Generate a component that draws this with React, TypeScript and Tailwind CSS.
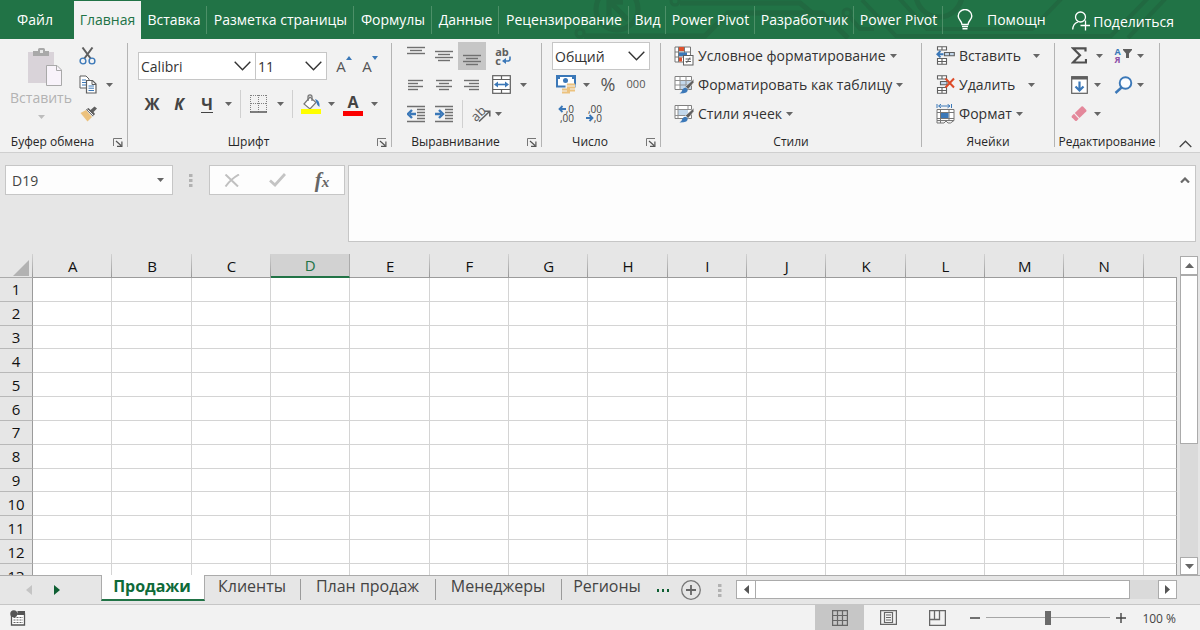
import React from "react";

type Kids = { children?: React.ReactNode };

const G = "#5f5f5f";
const B = "#3b78b8";

function Svg({ w, h, label, children }: Kids & { w: number; h: number; label?: string }) {
  return (
    <svg width={w} height={h} viewBox={`0 0 ${w} ${h}`} fill="none" className="shrink-0" aria-hidden={label ? undefined : true} aria-label={label}>
      {children}
    </svg>
  );
}

function Caret({ light = false }: { light?: boolean }) {
  return (
    <Svg w={7} h={4}>
      <path d="M0 0H7L3.500 4Z" fill={light ? "#bdbdbd" : "#666"} />
    </Svg>
  );
}

function Lines({ rows }: { rows: number[][] }) {
  return (
    <Svg w={20} h={20}>
      {rows.map(([y, a, b]) => (
        <path key={y} d={`M${a} ${y + 0.5}H${b}`} stroke="#707070" strokeWidth="1.4" />
      ))}
    </Svg>
  );
}

function Tool({ label, className = "", children }: Kids & { label: string; className?: string }) {
  return (
    <button type="button" aria-label={label} title={label} className={`flex shrink-0 items-center justify-center ${className}`}>
      {children}
    </button>
  );
}

function Launcher({ label }: { label: string }) {
  return (
    <Tool label={label} className="h-5 w-[18px]">
      <Svg w={10} h={9}>
        <path d="M0.5 8V0.5H9" stroke="#777" />
        <path d="M3 3L8 7.500M8.900 3.500V8.400H4" stroke="#555" strokeWidth="1.2" />
      </Svg>
    </Tool>
  );
}

function Group({ title, width, launcher, children }: Kids & { title: string; width: string; launcher?: boolean }) {
  return (
    <section aria-label={title} className={`flex shrink-0 ${width}`}>
      <div className="flex min-w-0 flex-1 flex-col">
        <div className="h-[94px]">{children}</div>
        <div className="flex h-5 items-center text-[12px] leading-5 text-[#262626]">
          <span className={`flex-1 text-center whitespace-nowrap ${launcher ? "pr-1" : ""}`}>{title}</span>
          {launcher && <Launcher label={`${title}: параметры`} />}
        </div>
      </div>
      <div className="mt-1 h-[104px] w-px bg-[#b4b4b4]" />
    </section>
  );
}

function Combo({ label, value, options, className }: { label: string; value: string; options: string[]; className: string }) {
  return (
    <label className={`relative flex h-7 shrink-0 items-center border border-[#c6c6c6] bg-white ${className}`}>
      <select aria-label={label} defaultValue={value} className="h-full w-full appearance-none bg-transparent pl-0.5 text-[14px] text-[#333] outline-none">
        {options.map((o) => (
          <option key={o}>{o}</option>
        ))}
      </select>
      <span className="pointer-events-none absolute right-1">
        <Svg w={17} h={10}>
          <path d="M0.7 0.7L8.5 8.7L16.3 0.7" stroke="#333" strokeWidth="1.4" />
        </Svg>
      </span>
    </label>
  );
}

/* ---------- icons ---------- */

const PasteIcon = () => (
  <Svg w={36} h={40}>
    <path d="M1 5H27V36H1Z" fill="#d9d3d9" />
    <path d="M6 4H11V2.500Q11 1 12.500 1H16.500Q18 1 18 2.500V4H22V9H6Z" fill="#a9a9a9" />
    <rect x="13" y="3" width="3" height="3" fill="#e8e8e8" />
    <path d="M19.500 18.500H30L34.500 23V38.500H19.500Z" fill="#f8f3fa" stroke="#a9a9a9" />
    <path d="M29.500 18.500V23.500H34.500" stroke="#a9a9a9" />
  </Svg>
);

const CutIcon = () => (
  <Svg w={18} h={18}>
    <path d="M3.500 0.500L12 12M13.500 0.500L5 12" stroke={G} strokeWidth="2" />
    <circle cx="4" cy="14" r="2.900" fill="#f2f2f2" stroke={B} strokeWidth="1.400" />
    <circle cx="13" cy="14" r="2.900" fill="#f2f2f2" stroke={B} strokeWidth="1.400" />
  </Svg>
);

const CopyIcon = () => (
  <Svg w={18} h={19}>
    <path d="M1 1H7L10 4V13H1Z" fill="#fff" stroke={G} />
    <path d="M3 5H7M3 7.500H7M3 10H7" stroke={B} />
    <path d="M7.500 5.500H13.500L17 9V18H7.500Z" fill="#fff" stroke={G} strokeWidth="1.200" />
    <path d="M13 5.500V9.500H17" stroke={G} />
    <path d="M9.500 11H15M9.500 13.200H15M9.500 15.500H15" stroke={B} />
  </Svg>
);

const BrushIcon = () => (
  <Svg w={18} h={16}>
    <path d="M0.500 7L6 4L12 11L7.500 15.500Z" fill="#ecc27e" />
    <path d="M6 3.500L8.500 2L10.500 4L14.500 0.500L17 2.500L13.500 6L15 8L13 10.500Z" fill={G} />
    <path d="M7.500 3.500L13.500 9.500" stroke="#f2f2f2" />
  </Svg>
);

const BordersIcon = () => (
  <Svg w={18} h={18}>
    <path d="M1 0.500H17M1 8.500H17" stroke="#808080" strokeDasharray="1 1" />
    <path d="M0.500 0V17M8.500 0V17M16.500 0V17" stroke="#808080" strokeDasharray="1 1" />
    <path d="M0 17H17" stroke={G} strokeWidth="1.600" />
  </Svg>
);

const FillIcon = () => (
  <Svg w={20} h={20}>
    <path d="M3 10L9 3L15 8.500L9 15Z" fill="#fff" stroke="#777" strokeWidth="1.200" />
    <path d="M7 7V3Q7 0.800 9 0.800Q11 0.800 11 3V7" stroke="#777" strokeWidth="1.300" />
    <path d="M14 5Q19 6 18.500 13Q16 12 15.500 8.500Z" fill={B} />
    <rect y="15" width="20" height="5" fill="#ffff00" />
  </Svg>
);

const WrapIcon = () => (
  <span className="flex flex-col items-start text-[11px] leading-[9px] font-bold text-[#5f5f5f]">
    <span>ab</span>
    <span className="flex items-center gap-px">
      c
      <Svg w={9} h={9}>
        <path d="M8 0.500V3Q8 5 6 5H3" stroke={B} strokeWidth="1.600" />
        <path d="M4 2L0 5L4 8Z" fill={B} />
      </Svg>
    </span>
  </span>
);

const MergeIcon = () => (
  <Svg w={19} h={19}>
    <rect x="0.700" y="0.700" width="17.600" height="17.600" fill="#fff" stroke={G} strokeWidth="1.200" />
    <path d="M1 4.500H18M1 14.500H18M9.500 1V4.500M9.500 14.500V18" stroke={G} strokeWidth="1.200" />
    <path d="M4 9.500H15" stroke={B} strokeWidth="1.600" />
    <path d="M6 6.500L2 9.500L6 12.500ZM13 6.500L17 9.500L13 12.500Z" fill={B} />
  </Svg>
);

const IndentIcon = ({ right = false }: { right?: boolean }) => (
  <Svg w={18} h={18}>
    <path d="M0 1.500H18M10 4.500H18M10 7.500H18M10 10.500H18M10 13.500H18M0 16.500H18" stroke="#707070" strokeWidth="1.300" />
    <path d={right ? "M0 9H6M4 5L8 9L4 13" : "M9 9H3M5 5L1 9L5 13"} stroke={B} strokeWidth="2.400" />
  </Svg>
);

const OrientIcon = () => (
  <span className="flex h-5 w-5 items-center">
    <span className="-rotate-45 pb-0.5 text-[13px] leading-3 text-[#5f5f5f]">ab</span>
    <span className="-ml-2 pt-1">
      <Svg w={13} h={12}>
        <path d="M1 11.500L11.500 1.500M6.500 1.200H11.800V6.500" stroke={G} strokeWidth="1.500" />
      </Svg>
    </span>
  </span>
);

const MoneyIcon = () => (
  <Svg w={20} h={20}>
    <rect x="1" y="1" width="18" height="10.500" fill="#fff" stroke={B} strokeWidth="2" />
    <rect x="1" y="1" width="3" height="3" fill={B} />
    <rect x="16" y="1" width="3" height="3" fill={B} />
    <circle cx="9.500" cy="5.500" r="2.500" fill={B} />
    <path d="M9.500 9.500Q14.500 7 19.500 9.500V18H9.500Z" fill="#f2f2f2" />
    <path d="M11 8.500H19V10.500H11ZM11 11.500H19V13.500H11ZM11 14.500H19V16.500H11ZM6 13.500H14V15.500H6ZM6 16.500H14V18.500H6Z" fill="#ecc27e" />
  </Svg>
);

const DecimalIcon = ({ less = false }: { less?: boolean }) => {
  const arrow = (
    <Svg w={8} h={8}>
      <path d={less ? "M0 4H6M3.500 1L6.500 4L3.500 7" : "M8 4H2M4.500 1L1.500 4L4.500 7"} stroke={B} strokeWidth="1.800" />
    </Svg>
  );
  return (
    <span className="flex w-[18px] flex-col items-end text-[10px] leading-[9px] text-[#444]">
      <span className="flex items-center">{!less && arrow}{less ? ",00" : ",0"}</span>
      <span className="flex items-center">{less && arrow}{less ? ",0" : ",00"}</span>
    </span>
  );
};

const CondIcon = () => (
  <Svg w={20} h={20}>
    <path d="M1 1H16.500V16H1Z" fill="#fff" stroke="#777" />
    <path d="M4.500 1V16M10.500 1V16M1 6H16M1 11H16" stroke="#777" />
    <rect x="5" y="1" width="5" height="4" fill="#e0502c" />
    <rect x="5" y="6.500" width="8" height="3.500" fill={B} />
    <rect x="5" y="11.500" width="3" height="4" fill="#e0502c" />
    <rect x="9.500" y="9.500" width="9.500" height="9.500" fill="#fff" stroke={G} />
    <path d="M11.500 13H17M11.500 15.500H17M16 11.500L12.500 17" stroke={G} />
  </Svg>
);

const StyleIcon = ({ cell = false }: { cell?: boolean }) => (
  <Svg w={20} h={20}>
    <path d="M1 1.500H17.500V14.500H1Z" fill="#fff" stroke="#808080" />
    <rect x={cell ? 4 : 6} y={cell ? 5.500 : 6} width={cell ? 10 : 11} height={cell ? 6 : 8} fill="#c3d8ec" />
    <path d={cell ? "M1 5.500H17.500M1 11.500H17.500M4 1.500V14.500M14 1.500V5.500" : "M1 5.500H17.500M1 10H17.500M6 1.500V14.500M12 1.500V14.500"} stroke="#909090" />
    <path d="M19.800 4L11.500 11.500L14 14.500L19.800 7.500Z" fill={G} stroke="#f2f2f2" strokeWidth="0.600" />
    <path d="M5.500 18.500Q8 17 8.500 14.500Q10.500 11.500 13.500 14Q15 18.500 5.500 18.500Z" fill={B} />
  </Svg>
);

const InsertIcon = () => (
  <Svg w={19} h={19}>
    <path d="M1.500 0.700H10.500V4H1.500ZM6 0.700V4M1.500 12.500H10.500V18.300H1.500ZM1.500 15.500H10.500M6 12.500V18.300" fill="#fff" stroke={G} strokeWidth="1.100" />
    <path d="M8.500 6.500H18.300V9.800H8.500ZM13.500 6.500V9.800" fill="#c3d8ec" stroke={G} strokeWidth="1.100" />
    <path d="M7.500 8.200H2M4.500 5L1.300 8.200L4.500 11.400" stroke={B} strokeWidth="1.900" />
  </Svg>
);

const DeleteIcon = () => (
  <Svg w={19} h={19}>
    <path d="M1.500 0.700H10.500V4H1.500ZM6 0.700V4M1.500 12.500H10.500V18.300H1.500ZM1.500 15.500H10.500M6 12.500V18.300" fill="#fff" stroke={G} strokeWidth="1.100" />
    <path d="M4.500 6.500H11V9.800H4.500Z" fill="#c3d8ec" stroke={G} strokeWidth="1.100" />
    <path d="M9.500 3.500L18 12.500M18 3.500L9.500 12.500" stroke="#dd4b28" strokeWidth="2" />
  </Svg>
);

const FormatIcon = () => (
  <Svg w={19} h={20}>
    <path d="M1 0V4M15.500 0V4M3 2H14M5 0.200L2.500 2L5 3.800M11.500 0.200L14 2L11.500 3.800" stroke={B} />
    <path d="M1 5.500H18V16.500H1Z" fill="#fff" stroke="#777" />
    <path d="M4.500 5.500V19M13 5.500V17M1 8.500H18M1 14.500H18" stroke="#777" />
    <path d="M1 16.500V19H8L10 17L12 19H14.500L18 16.500" stroke="#777" />
    <rect x="5" y="9" width="7.500" height="5" fill={B} />
  </Svg>
);

const SortIcon = () => (
  <span className="flex items-center text-[9px] leading-[8px] font-bold">
    <span className="flex flex-col items-center">
      <span className="text-[#3b78b8]">А</span>
      <span className="text-[#8e4fa8]">Я</span>
    </span>
    <span className="pb-1 pl-0.5">
      <Svg w={9} h={9}>
        <path d="M0 0H9V1L6 4.500V9H3V4.500L0 1Z" fill={G} />
      </Svg>
    </span>
  </span>
);

const FillDownIcon = () => (
  <Svg w={17} h={18}>
    <rect x="0.700" y="0.700" width="15.600" height="16.600" fill="#fff" stroke={G} strokeWidth="1.200" />
    <rect x="0.500" y="0.500" width="16" height="3" fill={G} />
    <path d="M8.500 5.500V14M4.500 10.500L8.500 14.500L12.500 10.500" stroke={B} strokeWidth="2.200" />
  </Svg>
);

const FindIcon = () => (
  <Svg w={19} h={18}>
    <circle cx="11.500" cy="7" r="5.800" fill="#fafcff" stroke={B} strokeWidth="1.900" />
    <path d="M7.500 11.500L1.500 17" stroke={B} strokeWidth="2.400" />
  </Svg>
);

const EraserIcon = () => (
  <Svg w={16} h={16}>
    <path d="M10.500 0.500Q11.300 0 12 0.600L15.300 4Q15.800 4.700 15.200 5.400L8.500 12L3.800 7Z" fill="#e4889b" />
    <path d="M3 7.800L7.700 12.800L5.800 14.700Q5 15.300 4.200 14.700L0.800 11.200Q0.300 10.500 0.900 9.800Z" fill="#e4889b" />
  </Svg>
);

/* ---------- header ---------- */

const tabs: [string, string][] = [
  ["Вставка", "w-[66px]"],
  ["Разметка страницы", "w-[147px]"],
  ["Формулы", "w-[78px]"],
  ["Данные", "w-[67px]"],
  ["Рецензирование", "w-[130px]"],
  ["Вид", "w-[37px]"],
  ["Power Pivot", "w-[89px]"],
  ["Разработчик", "w-[99px]"],
  ["Power Pivot", "w-[89px]"],
];

function Header() {
  return (
    <header className="relative flex h-[39px] overflow-hidden bg-[#217346] text-[14px] text-white">
      <svg className="pointer-events-none absolute inset-0" width="1200" height="39" viewBox="0 0 1200 39" fill="none" stroke="#216941" strokeWidth="5" aria-hidden="true">
        <circle cx="617" cy="9" r="21" />
        <path d="M628 20L611 3M609 16V2H623" />
        <circle cx="580" cy="33" r="4" strokeWidth="3" />
        <path d="M584 36H705L728 13H822L848 38" />
        <circle cx="675" cy="1" r="4" strokeWidth="3" />
        <path d="M680 3H800L812 13" />
        <circle cx="847" cy="13" r="4" strokeWidth="3" />
        <path d="M850 17L860 29H874M862 0L896 36H1111L1152 -6M899 -2L927 29H1032L1062 -2M1128 38L1166 -2" strokeWidth="4" />
        <circle cx="939" cy="-6" r="23" />
      </svg>
      <nav className="relative flex shrink-0">
        <button type="button" className="w-[74px] pr-1">Файл</button>
        <button type="button" aria-current="page" className="mt-px w-[67px] bg-[#f2f2f2] pb-px text-[#217346]">Главная</button>
        {tabs.map(([name, w], i) => (
          <button key={i} type="button" className={`flex items-center ${w}`}>
            <span className="flex-1 pl-px text-center whitespace-nowrap">{name}</span>
            <span className="h-7 w-px bg-[#4d9068]" />
          </button>
        ))}
      </nav>
      <button type="button" className="relative ml-3.5 flex shrink-0 items-center gap-3.5 whitespace-nowrap">
        <Svg w={16} h={21}>
          <path d="M5 15.500C5 12 1.200 11 1.200 7A6.600 6.300 0 0 1 14.800 7C14.800 11 11 12 11 15.500Z" stroke="#fff" strokeWidth="1.400" />
          <path d="M5 17.500H11M5.500 19.800H10.500" stroke="#fff" strokeWidth="1.400" />
        </Svg>
        Помощн
      </button>
      <button type="button" className="relative mr-[26px] ml-auto flex shrink-0 items-center gap-[3px] pt-[3px] whitespace-nowrap">
        <Svg w={18} h={20}>
          <circle cx="8.500" cy="6" r="5" stroke="#fff" strokeWidth="1.300" />
          <path d="M0.700 18.500Q1 12.500 6 11M13.500 9.500V19.500M8.500 14.500H18" stroke="#fff" strokeWidth="1.300" />
        </Svg>
        Поделиться
      </button>
    </header>
  );
}

/* ---------- ribbon ---------- */

function CommandRow({ icon, text }: { icon: React.ReactNode; text: string }) {
  return (
    <button type="button" className="flex h-[29px] items-center gap-1 whitespace-nowrap text-[14px] text-[#333]">
      {icon}
      <span>{text}</span>
      <Caret />
    </button>
  );
}

function Ribbon() {
  return (
    <div className="flex h-[114px] border-b border-[#cfcfcf] bg-[#f2f2f2]">
      <Group title="Буфер обмена" width="w-[128px]" launcher>
        <div className="flex pt-0.5">
          <button type="button" className="flex w-[76px] flex-col items-center pt-1.5 pl-1.5 text-[14px] text-[#b3b3b3]">
            <span className="pl-2"><PasteIcon /></span>
            <span className="leading-[22px]">Вставить</span>
            <span className="flex h-4 items-center"><Caret light /></span>
          </button>
          <div className="flex flex-col">
            <Tool label="Вырезать" className="h-[29px] w-6"><CutIcon /></Tool>
            <div className="flex">
              <Tool label="Копировать" className="h-[29px] w-6"><CopyIcon /></Tool>
              <Tool label="Варианты копирования" className="w-[18px]"><Caret /></Tool>
            </div>
            <Tool label="Формат по образцу" className="h-[29px] w-[26px]"><BrushIcon /></Tool>
          </div>
        </div>
      </Group>

      <Group title="Шрифт" width="w-[264px]" launcher>
        <div className="flex flex-col gap-2.5 pt-[13px] pl-2.5">
          <div className="flex items-center">
            <Combo label="Шрифт" value="Calibri" options={["Calibri", "Arial"]} className="w-[118px]" />
            <Combo label="Размер шрифта" value="11" options={["11", "12"]} className="w-[71px] border-l-0" />
            <Tool label="Увеличить размер" className="ml-2 h-7 w-[18px]">
              <span className="text-[15px] text-[#555]">A</span>
              <span className="self-start pt-1"><Svg w={6} h={4}><path d="M0 4L3 0L6 4Z" fill={B} /></Svg></span>
            </Tool>
            <Tool label="Уменьшить размер" className="ml-2 h-7 w-[18px]">
              <span className="text-[15px] text-[#555]">A</span>
              <span className="self-start pt-1"><Svg w={6} h={4}><path d="M0 0H6L3 4Z" fill={B} /></Svg></span>
            </Tool>
          </div>
          <div className="flex h-7 items-center text-[16px] font-bold text-[#444]">
            <Tool label="Полужирный" className="w-7">Ж</Tool>
            <Tool label="Курсив" className="w-[26px] italic">К</Tool>
            <Tool label="Подчеркнутый" className="w-[30px]"><span className="border-b border-[#444] leading-4">Ч</span></Tool>
            <Tool label="Варианты подчеркивания" className="w-[13px]"><Caret /></Tool>
            <span className="ml-[5px] h-7 w-px bg-[#d0d0d0]" />
            <Tool label="Границы" className="ml-[9px] w-[18px]"><BordersIcon /></Tool>
            <Tool label="Варианты границ" className="ml-1.5 w-3"><Caret /></Tool>
            <span className="ml-1.5 h-7 w-px bg-[#d0d0d0]" />
            <Tool label="Цвет заливки" className="ml-2 w-5"><FillIcon /></Tool>
            <Tool label="Варианты заливки" className="ml-1 w-3"><Caret /></Tool>
            <Tool label="Цвет текста" className="ml-1.5 h-6 w-5 flex-col">
              <span className="leading-[18px]">А</span>
              <span className="h-[5px] w-5 bg-[#fb0000]" />
            </Tool>
            <Tool label="Варианты цвета текста" className="ml-[5px] w-3"><Caret /></Tool>
          </div>
        </div>
      </Group>

      <Group title="Выравнивание" width="w-[150px]" launcher>
        <div className="flex flex-col pt-0.5 pl-2.5">
          <div className="flex h-[29px] items-center">
            <Tool label="По верхнему краю" className="h-7 w-7"><Lines rows={[[1, 1, 19], [4, 4, 16], [7, 1, 19]]} /></Tool>
            <Tool label="По середине" className="h-7 w-7"><Lines rows={[[5, 1, 19], [8, 4, 16], [11, 1, 19], [14, 4, 16]]} /></Tool>
            <Tool label="По нижнему краю" className="h-7 w-7 bg-[#c6c6c6]"><Lines rows={[[9, 1, 19], [12, 4, 16], [15, 1, 19], [18, 4, 16]]} /></Tool>
            <Tool label="Перенести текст" className="ml-[7px] w-5"><WrapIcon /></Tool>
          </div>
          <div className="flex h-[29px] items-center">
            <Tool label="По левому краю" className="h-7 w-7"><Lines rows={[[5, 2, 17], [8, 2, 12], [11, 2, 17], [14, 2, 12]]} /></Tool>
            <Tool label="По центру" className="h-7 w-7"><Lines rows={[[5, 2, 18], [8, 5, 15], [11, 2, 18], [14, 5, 15]]} /></Tool>
            <Tool label="По правому краю" className="h-7 w-7"><Lines rows={[[5, 2, 17], [8, 7, 17], [11, 2, 17], [14, 7, 17]]} /></Tool>
            <Tool label="Объединить" className="ml-1.5 w-[19px]"><MergeIcon /></Tool>
            <Tool label="Варианты объединения" className="ml-1.5 w-3"><Caret /></Tool>
          </div>
          <div className="flex h-[29px] items-center">
            <Tool label="Уменьшить отступ" className="h-7 w-7"><IndentIcon /></Tool>
            <Tool label="Увеличить отступ" className="h-7 w-7"><IndentIcon right /></Tool>
            <span className="ml-1 h-7 w-px bg-[#d0d0d0]" />
            <Tool label="Ориентация" className="ml-2 w-5"><OrientIcon /></Tool>
            <Tool label="Варианты ориентации" className="ml-px w-3"><Caret /></Tool>
          </div>
        </div>
      </Group>

      <Group title="Число" width="w-[119px]" launcher>
        <div className="flex flex-col pt-[3px] pl-2.5">
          <Combo label="Числовой формат" value="Общий" options={["Общий", "Числовой"]} className="w-[98px]" />
          <div className="flex h-[29px] items-center text-[#555]">
            <Tool label="Денежный формат" className="ml-1 w-5"><MoneyIcon /></Tool>
            <Tool label="Варианты денежного формата" className="ml-1 w-3"><Caret /></Tool>
            <Tool label="Процентный формат" className="ml-1.5 w-5 text-[18px]">%</Tool>
            <Tool label="Формат с разделителями" className="ml-1.5 w-6 text-[11px]">000</Tool>
          </div>
          <div className="flex h-[29px] items-center gap-2.5 pl-1">
            <Tool label="Увеличить разрядность"><DecimalIcon /></Tool>
            <Tool label="Уменьшить разрядность"><DecimalIcon less /></Tool>
          </div>
        </div>
      </Group>

      <Group title="Стили" width="w-[261px]">
        <div className="flex flex-col items-start pt-0.5 pl-[13px]">
          <CommandRow icon={<CondIcon />} text="Условное форматирование" />
          <CommandRow icon={<StyleIcon />} text="Форматировать как таблицу" />
          <CommandRow icon={<StyleIcon cell />} text="Стили ячеек" />
        </div>
      </Group>

      <Group title="Ячейки" width="w-[133px]">
        <div className="flex flex-col items-start pt-0.5 pl-3.5">
          <button type="button" className="flex h-[29px] items-center gap-1 text-[14px] text-[#333]">
            <InsertIcon />
            <span className="w-[70px] text-left">Вставить</span>
            <Caret />
          </button>
          <button type="button" className="flex h-[29px] items-center gap-1 text-[14px] text-[#333]">
            <DeleteIcon />
            <span className="w-[65px] text-left">Удалить</span>
            <Caret />
          </button>
          <CommandRow icon={<FormatIcon />} text="Формат" />
        </div>
      </Group>

      <Group title="Редактирование" width="w-[105px]">
        <div className="flex flex-col pt-0.5 pl-3.5">
          <div className="flex h-[29px] items-center">
            <Tool label="Сумма" className="w-5"><Svg w={16} h={17}><path d="M14.500 4.500V1.300H2L9 8.300L2 15.500H15V12" stroke="#505050" strokeWidth="2.200" /></Svg></Tool>
            <Tool label="Варианты суммы" className="ml-1 w-3"><Caret /></Tool>
            <Tool label="Сортировка и фильтр" className="ml-2 w-5"><SortIcon /></Tool>
            <Tool label="Варианты сортировки" className="ml-px w-3"><Caret /></Tool>
          </div>
          <div className="flex h-[29px] items-center">
            <Tool label="Заполнить" className="w-5"><FillDownIcon /></Tool>
            <Tool label="Варианты заполнения" className="ml-0.5 w-3"><Caret /></Tool>
            <Tool label="Найти и выделить" className="ml-2.5 w-5"><FindIcon /></Tool>
            <Tool label="Варианты поиска" className="ml-px w-3"><Caret /></Tool>
          </div>
          <div className="flex h-[29px] items-center">
            <Tool label="Очистить" className="w-5"><EraserIcon /></Tool>
            <Tool label="Варианты очистки" className="ml-0.5 w-3"><Caret /></Tool>
          </div>
        </div>
      </Group>

      <div className="flex flex-1 items-end justify-end pr-[7px]">
        <Tool label="Свернуть ленту" className="h-4 w-4">
          <Svg w={13} h={8}><path d="M0.700 7L6.500 1.200L12.300 7" stroke="#444" strokeWidth="1.300" /></Svg>
        </Tool>
      </div>
    </div>
  );
}

/* ---------- formula bar ---------- */

function Dots() {
  return (
    <Svg w={4} h={13}>
      <path d="M0 0H3.500V3H0ZM0 5H3.500V8H0ZM0 10H3.500V13H0Z" fill="#b2b2b2" />
    </Svg>
  );
}

function FormulaBar() {
  return (
    <div className="flex h-[101px] items-start px-1 pt-3 pl-[5px]">
      <div className="flex h-[30px] w-[168px] shrink-0 items-center border border-[#c6c6c6] bg-[#fdfdfd]">
        <input aria-label="Имя ячейки" defaultValue="D19" className="min-w-0 flex-1 bg-transparent pl-1.5 text-[14px] text-[#444] outline-none" />
        <Tool label="Список имен" className="h-full w-6"><Caret /></Tool>
      </div>
      <div className="flex h-[30px] w-9 shrink-0 items-center justify-center"><Dots /></div>
      <div className="flex h-[30px] w-[136px] shrink-0 items-center border border-[#c6c6c6] bg-[#fdfdfd]">
        <Tool label="Отмена" className="w-11">
          <Svg w={16} h={13}><path d="M1.500 0.500L14 12.500M15 0.500Q7 5 1.500 12.500" stroke="#c0c0c0" strokeWidth="2" /></Svg>
        </Tool>
        <Tool label="Ввод" className="w-[46px]">
          <Svg w={17} h={14}><path d="M1 7.500L6 12L16 1" stroke="#c4c4c4" strokeWidth="2.800" /></Svg>
        </Tool>
        <Tool label="Вставить функцию" className="w-11">
          <span className="font-['Liberation_Serif',serif] text-[21px] leading-6 font-bold text-[#666] italic">f</span>
          <span className="pt-1 font-['Liberation_Serif',serif] text-[15px] leading-5 font-bold text-[#666] italic">x</span>
        </Tool>
      </div>
      <div className="ml-[3px] flex h-[77px] flex-1 border border-[#c6c6c6] bg-[#fdfdfd]">
        <textarea aria-label="Строка формул" className="h-full flex-1 resize-none bg-transparent p-1 text-[14px] outline-none" />
        <Tool label="Свернуть строку формул" className="h-7 w-5">
          <Svg w={10} h={6}><path d="M1 5.500L5 1.500L9 5.500" stroke="#6a6a6a" strokeWidth="2.200" /></Svg>
        </Tool>
      </div>
    </div>
  );
}

/* ---------- sheet ---------- */

const columns = "ABCDEFGHIJKLMN".split("");
const rows = Array.from({ length: 13 }, (_, i) => i + 1);

const headLine = "bg-[linear-gradient(to_bottom,#d2d2d2,#999)] bg-[length:1px_100%] bg-right bg-no-repeat";

function Sheet() {
  return (
    <div className="flex min-h-[321px] flex-1">
      <div className="min-w-0 flex-1">
        <table className="h-full w-full table-fixed border-separate border-spacing-0 text-[15px]">
          <thead>
            <tr className="h-6">
              <th className={`w-[33px] border-b border-[#ababab] p-0 ${headLine}`}>
                <span className="flex justify-end pt-1 pr-1">
                  <Svg w={16} h={16}><path d="M16 0V16H0Z" fill="#b2b2b2" /></Svg>
                </span>
              </th>
              {columns.map((c) => (
                <th
                  key={c}
                  scope="col"
                  className={`h-6 p-0 leading-[22px] font-normal ${c === "D" ? "border-r border-b-2 border-r-[#ababab] border-b-[#217346] bg-[#d2d2d2] text-[#217346]" : `border-b border-[#9b9b9b] text-[#111] ${headLine}`}`}
                >
                  {c}
                </th>
              ))}
              <th aria-label="O" className="w-[33px] border-b border-[#9b9b9b] p-0" />
            </tr>
          </thead>
          <tbody>
            {rows.map((r) => {
              const last = r === 13;
              return (
                <tr key={r} className={last ? "h-[11px]" : ""}>
                  <th scope="row" className={`border-r border-[#9b9b9b] p-0 font-normal text-[#111] ${last ? "" : "border-b border-b-[#b8b8b8]"}`}>
                    <div className={last ? "h-2.5 overflow-hidden leading-[22px]" : "leading-[22px]"}>{r}</div>
                  </th>
                  {columns.map((c) => (
                    <td key={c} className={`border-r border-[#d4d4d4] bg-white p-0 ${last ? "" : "border-b"}`} />
                  ))}
                  <td className={`border-r border-r-[#9b9b9b] border-b-[#d4d4d4] bg-white p-0 ${last ? "" : "border-b"}`} />
                </tr>
              );
            })}
          </tbody>
        </table>
      </div>
      <div className="flex w-[23px] shrink-0 flex-col pt-0.5 pr-0.5 pl-[3px]">
        <Tool label="Вверх" className="h-[19px] border border-[#ababab] bg-white"><Svg w={9} h={5}><path d="M0 5L4.500 0L9 5Z" fill="#666" /></Svg></Tool>
        <div className="flex flex-1 flex-col bg-[#dadada]">
          <div className="h-[60%] border border-[#ababab] bg-white" />
        </div>
        <Tool label="Вниз" className="h-[18px] border border-[#ababab] bg-white"><Svg w={9} h={5}><path d="M0 0H9L4.500 5Z" fill="#666" /></Svg></Tool>
      </div>
    </div>
  );
}

const sheets: [string, string, boolean][] = [
  ["Клиенты", "w-24", true],
  ["План продаж", "w-[135px]", true],
  ["Менеджеры", "w-[126px]", true],
  ["Регионы", "w-[91px]", false],
];

function SheetTabs() {
  return (
    <div className="flex h-[30px] border-t border-b border-t-[#ababab] border-b-[#c6c6c6]">
      <div className="flex w-[101px] shrink-0 items-center gap-[22px] pl-[26px]">
        <Tool label="Предыдущие листы"><Svg w={6} h={10}><path d="M6 0V10L0 5Z" fill="#c4c4c4" /></Svg></Tool>
        <Tool label="Следующие листы"><Svg w={6} h={10}><path d="M0 0V10L6 5Z" fill="#0e5f33" /></Svg></Tool>
      </div>
      <button type="button" aria-current="page" className="-mt-px h-[26px] w-[104px] shrink-0 border-r border-b-2 border-l border-r-[#ababab] border-b-[#217346] border-l-[#ababab] bg-white pr-0.5 pb-0.5 text-[16px] leading-[22px] font-bold text-[#0e6a39]">
        Продажи
      </button>
      {sheets.map(([name, w, sep]) => (
        <button key={name} type="button" className={`flex h-[25px] shrink-0 items-start text-[16px] leading-[21px] text-[#444] ${w}`}>
          <span className="flex-1 pr-px text-center whitespace-nowrap">{name}</span>
          {sep && <span className="mt-[3px] h-[21px] w-px bg-[#9b9b9b]" />}
        </button>
      ))}
      <Tool label="Другие листы" className="w-5"><Svg w={13} h={3}><path d="M0 0H2V3H0ZM5 0H7V3H5ZM10 0H12V3H10Z" fill="#0e5f33" /></Svg></Tool>
      <Tool label="Новый лист" className="ml-2 w-5">
        <Svg w={20} h={20}><circle cx="10" cy="10" r="9.300" stroke="#777" strokeWidth="1.300" /><path d="M5 10H15M10 5V15" stroke="#666" strokeWidth="1.800" /></Svg>
      </Tool>
      <div className="ml-[17px] flex shrink-0 items-center"><Dots /></div>
      <div className="mt-1 mr-[23px] ml-3.5 flex h-[19px] flex-1">
        <Tool label="Влево" className="w-5 border border-[#ababab] bg-white"><Svg w={5} h={9}><path d="M5 0V9L0 4.500Z" fill="#555" /></Svg></Tool>
        <div className="flex flex-1 bg-[#dadada]">
          <div className="mr-7 flex-1 border border-l-0 border-[#ababab] bg-white" />
        </div>
        <Tool label="Вправо" className="w-[19px] border border-[#ababab] bg-white"><Svg w={5} h={9}><path d="M0 0V9L5 4.500Z" fill="#555" /></Svg></Tool>
      </div>
    </div>
  );
}

function StatusBar() {
  return (
    <footer className="flex h-[25px] items-stretch bg-[#f2f2f2]">
      <Tool label="Запись макроса" className="ml-2.5 w-4">
        <Svg w={16} h={16}>
          <path d="M1.500 4H14.500V15H1.500Z" fill="#fff" stroke="#555" strokeWidth="1.300" />
          <path d="M7.500 1H15V5H7.500Z" fill="#555" />
          <path d="M3.500 7.500H13M3.500 10H13M3.500 12.500H13" stroke="#666" strokeDasharray="2 1" />
          <circle cx="3.800" cy="3.800" r="3.500" fill="#555" />
        </Svg>
      </Tool>
      <div className="ml-auto flex">
        <Tool label="Обычный" className="w-[49px] bg-[#c6c6c6]">
          <Svg w={16} h={16}><path d="M0.600 0.600H15.400V15.400H0.600ZM5.500 0V16M10.500 0V16M0 5.500H16M0 10.500H16" stroke="#666" strokeWidth="1.200" /></Svg>
        </Tool>
        <Tool label="Разметка страницы" className="w-[49px]">
          <Svg w={17} h={15}><path d="M0.600 0.600H16.400V14.400H0.600ZM4.500 2.500H12.500V12.500H4.500Z" stroke="#666" strokeWidth="1.200" /><path d="M6 5H11M6 7.500H11M6 10H11" stroke="#666" /></Svg>
        </Tool>
        <Tool label="Страничный режим" className="w-[49px]">
          <Svg w={17} h={16}><path d="M0.600 0.600H16.400V15.400H0.600ZM5.500 0.600V9.500M0.600 9.500H10.500V0.600" stroke="#666" strokeWidth="1.300" /></Svg>
        </Tool>
        <Tool label="Уменьшить" className="ml-[7px] w-[11px]"><Svg w={10} h={2}><path d="M0 1H10" stroke="#444" strokeWidth="1.500" /></Svg></Tool>
        <input
          type="range"
          aria-label="Масштаб"
          min={0}
          max={200}
          defaultValue={100}
          className="mx-1.5 w-[124px] appearance-none bg-[linear-gradient(#a6a6a6,#a6a6a6)] bg-[length:100%_1px] bg-center bg-no-repeat [&::-webkit-slider-thumb]:h-3.5 [&::-webkit-slider-thumb]:w-1.5 [&::-webkit-slider-thumb]:appearance-none [&::-webkit-slider-thumb]:bg-[#6a6a6a]"
        />
        <Tool label="Увеличить" className="w-2.5"><Svg w={10} h={10}><path d="M0 5H10M5 0V10" stroke="#444" strokeWidth="1.400" /></Svg></Tool>
        <span className="mr-6 ml-4 flex items-center pt-0.5 text-[12px] whitespace-nowrap text-[#444]">100 %</span>
      </div>
    </footer>
  );
}

export default function App() {
  return (
    <div className="flex h-screen min-w-[1200px] flex-col overflow-hidden bg-[#e6e6e6] font-['Open_Sans','Noto_Sans',sans-serif]">
      <Header />
      <Ribbon />
      <FormulaBar />
      <Sheet />
      <SheetTabs />
      <StatusBar />
    </div>
  );
}
